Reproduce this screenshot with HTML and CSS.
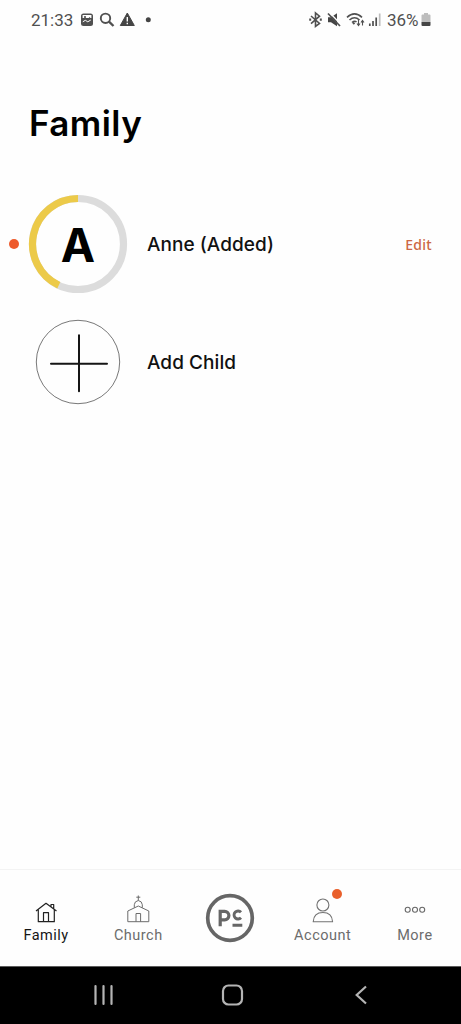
FILE: index.html
```html
<!DOCTYPE html>
<html lang="en">
<head>
<meta charset="utf-8">
<meta name="viewport" content="width=device-width, initial-scale=1">
<title>Family</title>
<link rel="stylesheet" href="styles.css">
</head>
<body>
<div class="screen">
  <header class="status">
    <span class="clock">21:33</span>
    <svg class="status-left" width="76" height="20" viewBox="80 10 76 20">
      <rect x="81" y="13.5" width="12" height="12.5" rx="2.5" fill="#505050"/>
      <rect x="82.600" y="15" width="8.800" height="3" fill="#fff"/>
      <path d="M82.500 20l2.500-2.500 2.500 2 2-2.500 2.500 2.500v2h-9.500z" fill="#505050"/>
      <circle cx="85" cy="17" r="1.100" fill="#505050"/>
      <path d="M82.800 21.800l2.500-1.500 2.500 1.500 3-1.800" stroke="#fff" stroke-width="1" fill="none"/>
      <circle cx="105.500" cy="18.300" r="4.700" fill="none" stroke="#505050" stroke-width="1.900"/>
      <path d="M109 21.700l4.500 4.300" stroke="#505050" stroke-width="2.400"/>
      <path d="M127.300 13l7 12.500h-14z" fill="#454545" stroke="#454545" stroke-width="1" stroke-linejoin="round"/>
      <path d="M127.300 17v4.500M127.300 22.700v1.600" stroke="#fff" stroke-width="1.400"/>
      <circle cx="148.300" cy="19.800" r="2.500" fill="#454545"/>
    </svg>
    <svg class="status-right" width="76" height="20" viewBox="307 10 76 20" fill="none" stroke="#505050" stroke-width="1.600">
      <path d="M311 16l8.500 7.500-4 3v-13.500l4 3.200-8.500 7.500"/>
      <path d="M309.200 19.700h2M319.800 19.700h2" stroke-width="2.200"/>
      <path d="M328 17.200h3l6-4v13l-6-4h-3z" fill="#454545" stroke="none"/>
      <path d="M329.500 12.500l12 12.500" stroke="#fff" stroke-width="1.300"/>
      <path d="M328 13.500l12 12.500" stroke-width="1.700"/>
      <path d="M347 17.300q7.500-7 15 0M349.500 20q5-4.500 10 0M352 22.500q2.500-2.200 4.500-.5"/>
      <path d="M353 22.500l1.500 1.500" stroke-width="2"/>
      <path d="M358.500 20v5M357 23.500l1.500 2 1.500-2M362.500 25.500v-5M361 22.500l1.500-2 1.500 2" stroke-width="1.100"/>
      <path d="M369.800 26v-2.500M373 26v-5M376.200 26v-8.500" stroke-width="1.700"/>
      <path d="M379.700 26V13.500" stroke="#bdbdbd" stroke-width="1.700"/>
    </svg>
    <span class="percent">36%</span>
    <svg class="battery" width="10" height="14" viewBox="0 0 10 14">
      <path d="M3 0h4v1.500h1.500q1 0 1 1V9h-9V2.500q0-1 1-1H3z" fill="#bdbdbd"/>
      <path d="M.5 9h9v3q0 1-1 1h-7q-1 0-1-1z" fill="#454545"/>
    </svg>
  </header>

  <main class="content">
    <h1 class="title">Family</h1>
    <section class="row row-member">
      <span class="alert-dot"></span>
      <div class="avatar">
        <svg class="ring" width="100" height="100" viewBox="0 0 100 100" fill="none" stroke-width="7.200">
          <circle cx="50" cy="50" r="45.500" stroke="#dcdcdc"/>
          <path d="M50 4.500A45.500 45.500 0 0 0 30.800 91.240" stroke="#ecca49"/>
        </svg>
        <span class="initial">A</span>
      </div>
      <span class="name">Anne (Added)</span>
      <a class="edit">Edit</a>
    </section>
    <section class="row row-add">
      <svg class="add" width="86" height="86" viewBox="0 0 86 86" fill="none">
        <circle cx="43" cy="43" r="41.700" stroke="#555" stroke-width=".8"/>
        <path d="M44 16.200v56M16 44.700h56" stroke="#151515" stroke-width="2" stroke-linecap="round"/>
      </svg>
      <span class="name name-add">Add Child</span>
    </section>
  </main>

  <nav class="tabs">
    <a class="tab tab-active">
      <svg class="tab-icon" width="30" height="34" viewBox="31 890 30 34" fill="none" stroke="#222" stroke-width="1.200" stroke-linejoin="round">
        <path d="M36 911l10-7.700 10.500 7.700M38.300 909.500V921.700h16V909.500M43.500 921.700v-9h5v9M51 906.500v-2h2.700v4"/>
      </svg>
      <span class="tab-label">Family</span>
    </a>
    <a class="tab">
      <svg class="tab-icon" width="30" height="34" viewBox="123 890 30 34" fill="none" stroke="#6c6c6c" stroke-width="1" stroke-linejoin="round">
        <path d="M127.800 911l10.500-5 10.500 5v10.700h-21zM136 921.700v-8.200h4.600v8.200M134.300 907.700v-3q.2-3.500 4-4.200 3.800.7 4 4.200v3M138.300 900.500v-5M136.300 897.200h4"/>
      </svg>
      <span class="tab-label">Church</span>
    </a>
    <a class="tab tab-brand">
      <svg class="brand" width="50" height="50" viewBox="0 0 50 50">
        <circle cx="25" cy="25" r="22.300" fill="none" stroke="#666" stroke-width="3.700"/>
        <path d="M15.200 33.300V18.400h4.500a4.100 4.100 0 0 1 0 8.400h-4.500" fill="none" stroke="#666" stroke-width="3.200"/>
        <path d="M36 19.300a4 4 0 1 0 0 5.400M27.500 32.200h9.800" fill="none" stroke="#666" stroke-width="2.900"/>
      </svg>
    </a>
    <a class="tab">
      <svg class="tab-icon" width="30" height="34" viewBox="307.800 890 30 34" fill="none" stroke="#737373" stroke-width="1.100">
        <circle cx="322.700" cy="905" r="6"/>
        <path d="M313 921.700q.5-9.200 9.700-9.200t9.700 9.200z" stroke-linejoin="round"/>
      </svg>
      <span class="tab-label">Account</span>
      <span class="badge"></span>
    </a>
    <a class="tab">
      <svg class="tab-icon" width="30" height="34" viewBox="400 890 30 34" fill="none" stroke="#686868" stroke-width="1.100">
        <circle cx="407.700" cy="909.700" r="2.500"/><circle cx="415" cy="909.700" r="2.500"/><circle cx="422.200" cy="909.700" r="2.500"/>
      </svg>
      <span class="tab-label">More</span>
    </a>
  </nav>

  <footer class="system">
    <svg width="461" height="57" viewBox="0 967 461 57" fill="none" stroke="#b4b4b4" stroke-width="2.200" stroke-linecap="round">
      <path d="M95.500 986v18M103.500 986v18M111.500 986v18"/>
      <rect x="223" y="985.500" width="19" height="19" rx="5.500"/>
      <path d="M366 986.500l-9.300 8.500 9.300 8.500" stroke-linecap="butt"/>
    </svg>
  </footer>
</div>
</body>
</html>
```
FILE: styles.css
```css
* { box-sizing: border-box; }
body { margin: 0; background: #fff; }
svg { display: block; flex: none; }

.screen {
  width: 461px;
  height: 1024px;
  display: flex;
  flex-direction: column;
  background: #fefefe;
  font-family: Inter, "Liberation Sans", sans-serif;
  color: #000;
  overflow: hidden;
}

.status {
  height: 40px;
  flex: none;
  display: flex;
  align-items: center;
  padding: 0 30px;
  font-family: Roboto, sans-serif;
  font-size: 17px;
  line-height: 20px;
  color: #505050;
}
.clock { width: 50px; padding-left: 1px; }
.status-right { margin-left: auto; }
.percent { width: 34px; margin-left: 4px; letter-spacing: -0.1px; white-space: nowrap; }

.content { flex: 1; padding: 60px 28px 0; }
.title {
  margin: 0 0 0 1px;
  font-size: 35px;
  line-height: 46px;
  font-weight: 600;
  letter-spacing: 0.4px;
}

.row { display: flex; align-items: center; position: relative; }
.row-member { height: 100px; margin-top: 48px; }
.row-add { height: 86px; margin-top: 25px; padding-left: 7px; }
.alert-dot {
  position: absolute;
  left: -19px;
  width: 10px;
  height: 10px;
  border-radius: 50%;
  background: #ee5a2b;
}
.avatar { display: grid; place-items: center; flex: none; }
.ring, .initial { grid-area: 1 / 1; }
.initial { font-size: 46px; line-height: 56px; font-weight: 650; padding-top: 1px; }
.name {
  margin-left: 19px;
  padding-top: 2px;
  font-size: 19px;
  line-height: 24px;
  font-weight: 480;
  letter-spacing: 0.05px;
  white-space: nowrap;
  color: #111;
}
.name-add { margin-left: 26px; }
.edit {
  margin-left: auto;
  padding: 1px 1px 0 0;
  font-family: "Noto Sans", sans-serif;
  font-size: 14px;
  line-height: 20px;
  font-weight: 500;
  letter-spacing: 0.3px;
  color: #cc6744;
}

.tabs {
  flex: none;
  height: 97px;
  display: grid;
  grid-template-columns: repeat(5, 1fr);
  border-top: 1px solid #f3f3f3;
}
.tab {
  position: relative;
  display: flex;
  flex-direction: column;
  align-items: center;
  padding-top: 20px;
  font-family: Roboto, sans-serif;
  color: #6c6c6c;
}
.tab-active { color: #151515; }
.tab-label {
  margin-top: 2px;
  font-size: 14.500px;
  line-height: 20px;
  letter-spacing: 0.5px;
}
.tab-brand { padding-top: 23px; }
.badge {
  position: absolute;
  top: 19px;
  left: 55px;
  width: 10px;
  height: 10px;
  border-radius: 50%;
  background: #e9602c;
}

.system { flex: none; height: 58px; background: #000; border-top: 1px solid #5c5c5c; }
```
